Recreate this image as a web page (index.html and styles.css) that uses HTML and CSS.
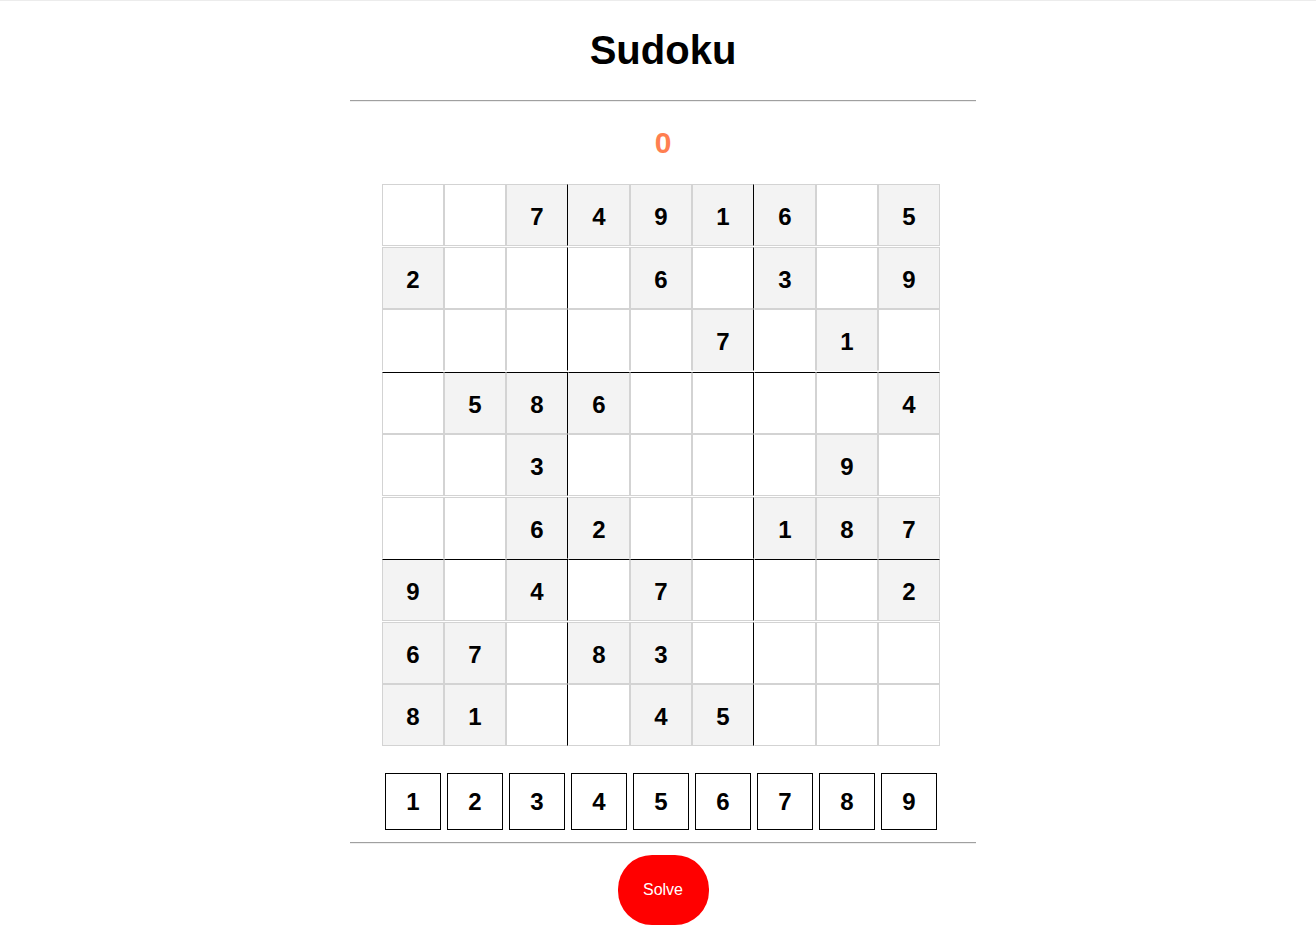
FILE: index.html
```html
<!DOCTYPE html>
<html lang="en">
<head>
<meta charset="utf-8">
<title>Sudoku</title>
<link rel="stylesheet" href="styles.css">
</head>
<body>
<div class="topline"></div>
<div class="app">
  <h1 class="title">Sudoku</h1>
  <hr class="rule">
  <div class="score">0</div>
  <div class="board">
    <div class="cell"></div><div class="cell"></div><div class="cell given c3">7</div><div class="cell given c4">4</div><div class="cell given">9</div><div class="cell given c6">1</div><div class="cell given c7">6</div><div class="cell"></div><div class="cell given">5</div>
    <div class="cell given">2</div><div class="cell"></div><div class="cell c3"></div><div class="cell c4"></div><div class="cell given">6</div><div class="cell c6"></div><div class="cell given c7">3</div><div class="cell"></div><div class="cell given">9</div>
    <div class="cell r3"></div><div class="cell r3"></div><div class="cell r3 c3"></div><div class="cell r3 c4"></div><div class="cell r3"></div><div class="cell given r3 c6">7</div><div class="cell r3 c7"></div><div class="cell given r3">1</div><div class="cell r3"></div>
    <div class="cell r4"></div><div class="cell given r4">5</div><div class="cell given r4 c3">8</div><div class="cell given r4 c4">6</div><div class="cell r4"></div><div class="cell r4 c6"></div><div class="cell r4 c7"></div><div class="cell r4"></div><div class="cell given r4">4</div>
    <div class="cell"></div><div class="cell"></div><div class="cell given c3">3</div><div class="cell c4"></div><div class="cell"></div><div class="cell c6"></div><div class="cell c7"></div><div class="cell given">9</div><div class="cell"></div>
    <div class="cell r3"></div><div class="cell r3"></div><div class="cell given r3 c3">6</div><div class="cell given r3 c4">2</div><div class="cell r3"></div><div class="cell r3 c6"></div><div class="cell given r3 c7">1</div><div class="cell given r3">8</div><div class="cell given r3">7</div>
    <div class="cell given r4">9</div><div class="cell r4"></div><div class="cell given r4 c3">4</div><div class="cell r4 c4"></div><div class="cell given r4">7</div><div class="cell r4 c6"></div><div class="cell r4 c7"></div><div class="cell r4"></div><div class="cell given r4">2</div>
    <div class="cell given">6</div><div class="cell given">7</div><div class="cell c3"></div><div class="cell given c4">8</div><div class="cell given">3</div><div class="cell c6"></div><div class="cell c7"></div><div class="cell"></div><div class="cell"></div>
    <div class="cell given">8</div><div class="cell given">1</div><div class="cell c3"></div><div class="cell c4"></div><div class="cell given">4</div><div class="cell given c6">5</div><div class="cell c7"></div><div class="cell"></div><div class="cell"></div>
  </div>
  <div class="pad">
    <button class="key">1</button><button class="key">2</button><button class="key">3</button><button class="key">4</button><button class="key">5</button><button class="key">6</button><button class="key">7</button><button class="key">8</button><button class="key">9</button>
  </div>
  <hr class="rule">
  <div class="actions">
    <button class="solve">Solve</button>
  </div>
</div>
</body>
</html>
```
FILE: styles.css
```css
html, body {
  margin: 0;
  padding: 0;
  background: #ffffff;
}

body {
  font-family: "Liberation Sans", Arial, sans-serif;
  color: #000;
}

.topline {
  border-top: 1px solid #ececec;
}

.app {
  width: 626px;
  margin-left: calc(50% - 308px);
  display: flex;
  flex-direction: column;
  align-items: center;
}

.title {
  margin: 26px 0 27px;
  font-size: 40px;
  font-weight: bold;
  line-height: 46px;
}

.rule {
  align-self: stretch;
  margin: 0;
  border: none;
  border-top: 1px solid #a0a0a0;
  border-bottom: 1px solid #eeeeee;
  height: 0;
}

.score {
  margin: 23px 0 24px;
  font-size: 30px;
  font-weight: bold;
  line-height: 35px;
  color: #ff7f50;
}

.board {
  align-self: flex-start;
  margin-left: 32px;
  display: grid;
  grid-template-columns: repeat(9, 62px);
  grid-template-rows: repeat(9, 62px);
  row-gap: 0.5px;
}

.cell {
  box-sizing: border-box;
  border: 1px solid #d3d3d3;
  background: #ffffff;
  display: flex;
  align-items: center;
  justify-content: center;
  padding-top: 4px;
  font-size: 24px;
  font-weight: bold;
}

.given {
  background: #f3f3f3;
}

.c3, .c6 {
  border-right-color: #000;
}

.c4, .c7 {
  border-left-color: transparent;
}

.r3 {
  border-bottom-color: transparent;
}

.r4 {
  border-top-color: #000;
}

.pad {
  align-self: flex-start;
  margin: 27px 0 12px 32px;
  display: flex;
  gap: 6px;
  padding-left: 3px;
}

.key {
  box-sizing: border-box;
  width: 56px;
  height: 57px;
  margin: 0;
  padding: 0;
  border: 1px solid #000;
  background: #fff;
  font-family: "Liberation Sans", Arial, sans-serif;
  font-size: 24px;
  font-weight: bold;
  color: #000;
}

.actions {
  display: flex;
  justify-content: center;
  padding-top: 11px;
}

.solve {
  width: 91px;
  height: 70px;
  border: none;
  border-radius: 34px;
  background: #ff0000;
  color: #fff;
  font-family: "Liberation Sans", Arial, sans-serif;
  font-size: 16px;
  padding: 0;
}
```
